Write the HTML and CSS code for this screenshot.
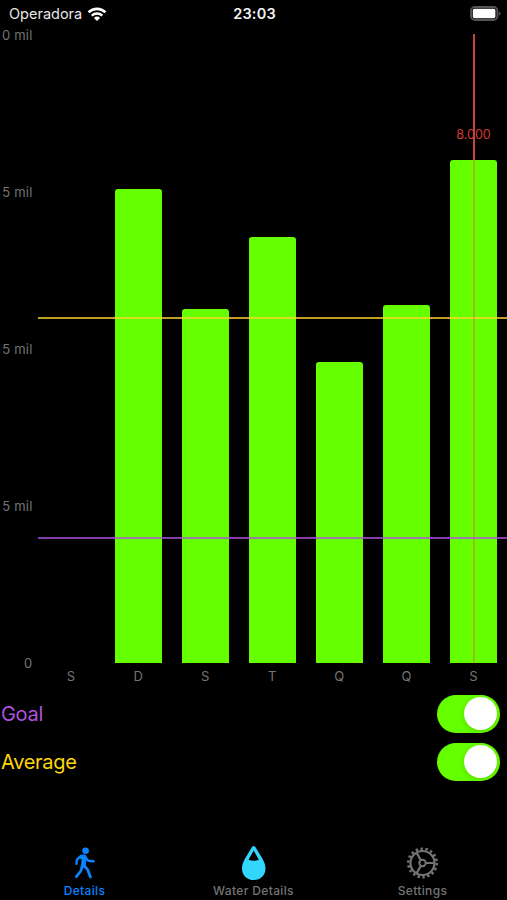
FILE: index.html
```html
<!DOCTYPE html>
<html lang="pt-BR">
<head>
    <meta charset="UTF-8">
    <meta name="viewport" content="width=device-width, initial-scale=1.0">
    <title>Details</title>
    <link rel="stylesheet" href="styles.css">
</head>
<body>
    <header class="status-bar">
        <div class="carrier">
            <span>Operadora</span>
            <svg class="wifi" width="20" height="14" viewBox="0 0 20 14">
                <path d="M1.6 5.3 A12 12 0 0 1 18.4 5.3" fill="none" stroke="#fff" stroke-width="2.6"/>
                <path d="M4.7 8.6 A7.6 7.6 0 0 1 15.3 8.6" fill="none" stroke="#fff" stroke-width="2.4"/>
                <path d="M10 14 L6.9 10.9 A4.5 4.5 0 0 1 13.1 10.9 Z" fill="#fff"/>
            </svg>
        </div>
        <div class="clock">23:03</div>
        <svg class="battery" width="31" height="15" viewBox="0 0 31 15">
            <rect x="1" y="1" width="26.4" height="13" rx="4" fill="none" stroke="#555" stroke-width="1.9"/>
            <rect x="2.8" y="2.8" width="22.6" height="9.4" rx="1.6" fill="#fff"/>
            <path d="M28.8 5.4 Q30.6 6.2 30.6 7.5 Q30.6 8.8 28.8 9.6 Z" fill="#555"/>
        </svg>
    </header>

    <main>
        <section class="chart">
            <div class="y-axis">
                <span>0 mil</span>
                <span>5 mil</span>
                <span>5 mil</span>
                <span>5 mil</span>
                <span>0</span>
            </div>
            <div class="plot">
                <div class="bar" style="height: 0"></div>
                <div class="bar" style="height: 75.3%"></div>
                <div class="bar" style="height: 56.3%"></div>
                <div class="bar" style="height: 67.7%"></div>
                <div class="bar" style="height: 47.8%"></div>
                <div class="bar" style="height: 56.9%"></div>
                <div class="bar" style="height: 79.9%"></div>
                <div class="rule average-rule" style="bottom: 54.7%"></div>
                <div class="rule goal-rule" style="bottom: 19.7%"></div>
                <div class="selection">
                    <div class="selection-line"></div>
                    <span class="selection-value">8.000</span>
                </div>
            </div>
            <div class="x-axis">
                <span>S</span>
                <span>D</span>
                <span>S</span>
                <span>T</span>
                <span>Q</span>
                <span>Q</span>
                <span>S</span>
            </div>
        </section>

        <section class="options">
            <div class="option goal">
                <span>Goal</span>
                <div class="toggle"><div class="knob"></div></div>
            </div>
            <div class="option average">
                <span>Average</span>
                <div class="toggle"><div class="knob"></div></div>
            </div>
        </section>
    </main>

    <nav class="tab-bar">
        <a class="tab active">
            <svg width="36" height="36" viewBox="0 0 36 36" fill="none" stroke="currentColor" stroke-linecap="round" stroke-linejoin="round">
                <circle cx="18.6" cy="5.8" r="3.3" fill="currentColor" stroke="none"/>
                <path d="M14.8 12 L17.2 12 L16.4 20.5" stroke-width="4.8"/>
                <path d="M13.2 11.8 L10 14.4 L9.4 18.8" stroke-width="2.4"/>
                <path d="M18.6 12.4 L21.2 15.8 L26.6 16.3" stroke-width="2.4"/>
                <path d="M17 20.5 L20.6 24.6 L23.4 32" stroke-width="2.8"/>
                <path d="M15.2 21 L13.8 26 L9.4 31.6" stroke-width="2.8"/>
            </svg>
            <span>Details</span>
        </a>
        <a class="tab">
            <svg class="drop" width="36" height="36" viewBox="0 0 36 36">
                <path d="M17.7 1 C16.4 1 15.7 2.4 14.4 4.8 C11.4 10.4 6 16.5 6 23.4 C6 30.4 11.3 35 17.7 35 C24.1 35 29.5 30.4 29.5 23.4 C29.5 16.5 24 10.4 21 4.8 C19.7 2.4 19 1 17.7 1 Z M17.7 5.6 L22.9 14.8 Q17.7 16.6 12.5 14.8 Z" fill="currentColor" fill-rule="evenodd"/>
            </svg>
            <span>Water Details</span>
        </a>
        <a class="tab">
            <svg width="36" height="36" viewBox="0 0 36 36" fill="none" stroke="currentColor">
                <circle cx="17.5" cy="18" r="14.2" stroke-width="2.6" stroke-dasharray="2.4 2.558"/>
                <circle cx="17.5" cy="18" r="12" stroke-width="2.2"/>
                <circle cx="17.5" cy="18" r="3.2" stroke-width="2"/>
                <path d="M20.7 18 H29.5 M15.9 15.2 L11.5 7.6 M15.9 20.8 L11.5 28.4" stroke-width="2.2"/>
            </svg>
            <span>Settings</span>
        </a>
    </nav>
</body>
</html>
```

FILE: styles.css
```css
* {
    box-sizing: border-box;
}
body {
    margin: 0;
    height: 900px;
    display: flex;
    flex-direction: column;
    background-color: #000;
    color: #fff;
    font-family: Inter, "Liberation Sans", sans-serif;
    overflow: hidden;
}
svg {
    display: block;
}
.status-bar {
    display: grid;
    grid-template-columns: 1fr auto 1fr;
    align-items: center;
    height: 34px;
    padding: 0 6px 7px 8px;
    font-size: 14.5px;
}
.carrier {
    display: flex;
    align-items: center;
    gap: 5px;
    padding-left: 1px;
    color: #e6e6e6;
}
.clock {
    font-weight: 600;
    letter-spacing: 0.2px;
    color: #f2f2f2;
}
.battery {
    justify-self: end;
}
main {
    flex: 1;
}
.chart {
    display: grid;
    grid-template-columns: 37.5px 469.5px;
    grid-template-rows: 629px 27px;
    color: #747474;
    font-size: 13px;
}
.y-axis {
    display: flex;
    flex-direction: column;
    justify-content: space-between;
    margin: -9px 0 -10px;
    padding-right: 5px;
    text-align: right;
    letter-spacing: 0.2px;
    line-height: 20px;
    white-space: nowrap;
}
.plot {
    position: relative;
    display: grid;
    grid-template-columns: repeat(7, 1fr);
    justify-items: center;
    align-items: end;
}
.bar {
    width: 47px;
    background-color: #66ff00;
    border-radius: 3px 3px 0 0;
}
.rule {
    position: absolute;
    left: 0;
    right: 0;
    height: 2px;
}
.average-rule {
    background-color: rgba(255, 214, 50, 0.75);
}
.goal-rule {
    background-color: rgba(175, 82, 222, 0.75);
}
/* line over the selected day, fades where it crosses the bar */
.selection {
    position: absolute;
    top: 0;
    bottom: 0;
    right: 0;
    width: 67px;
    display: flex;
    justify-content: center;
}
.selection-line {
    width: 2px;
    background: linear-gradient(#c9423b 20.1%, rgba(255, 69, 58, 0.35) 20.1%);
}
.selection-value {
    position: absolute;
    top: 93px;
    color: #d63a32;
    font-size: 12.5px;
    line-height: 16px;
}
.x-axis {
    grid-column: 2;
    display: grid;
    grid-template-columns: repeat(7, 1fr);
    text-align: center;
    line-height: 26px;
}
.options {
    padding: 5px 7px 0 1px;
}
.option {
    display: flex;
    justify-content: space-between;
    align-items: center;
    height: 38px;
    margin-bottom: 10px;
    font-size: 20px;
    letter-spacing: -0.3px;
}
.goal {
    color: #af52de;
}
.average {
    color: #ffd60a;
}
.toggle {
    display: flex;
    justify-content: flex-end;
    width: 63px;
    height: 38px;
    padding: 2px 3px;
    border-radius: 19px;
    background-color: #66ff00;
}
.knob {
    width: 33px;
    height: 33px;
    border-radius: 50%;
    background-color: #fff;
    box-shadow: 0 2px 6px rgba(0, 0, 0, 0.15);
}
.tab-bar {
    display: grid;
    grid-template-columns: repeat(3, 1fr);
    height: 55px;
}
.tab {
    display: flex;
    flex-direction: column;
    align-items: center;
    gap: 1px;
    color: #747474;
    font-size: 12px;
    font-weight: 500;
    letter-spacing: 0.35px;
    line-height: 18px;
}
.active {
    color: #0a84ff;
}
.drop {
    color: #32d7ff;
}
```
